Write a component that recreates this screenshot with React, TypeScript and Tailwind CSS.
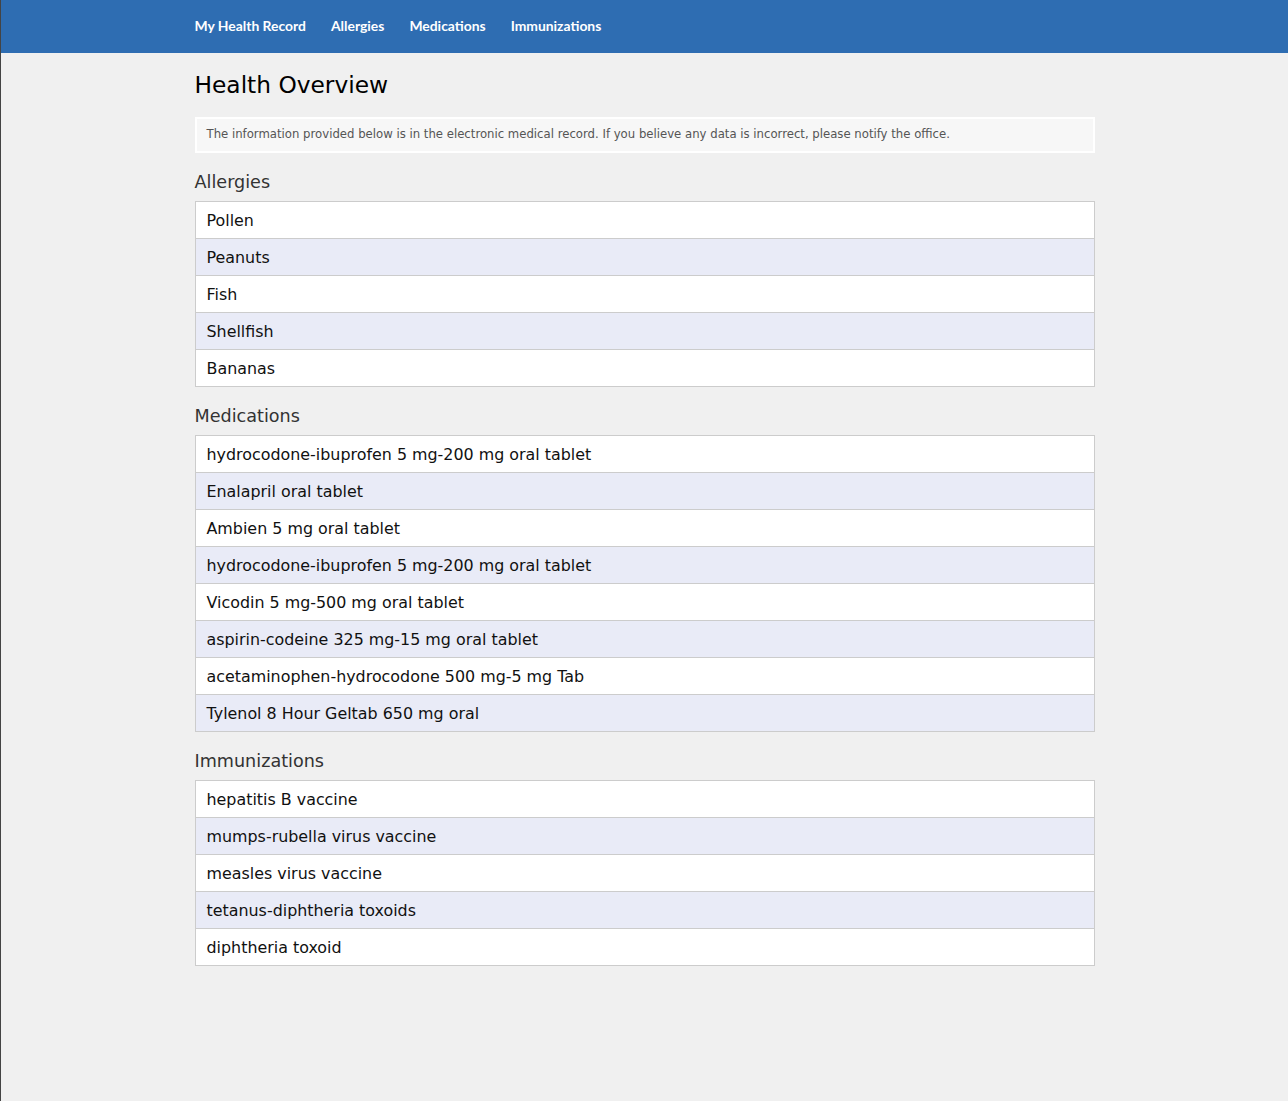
import React from "react";

const allergies = ["Pollen", "Peanuts", "Fish", "Shellfish", "Bananas"];
const medications = [
  "hydrocodone-ibuprofen 5 mg-200 mg oral tablet",
  "Enalapril oral tablet",
  "Ambien 5 mg oral tablet",
  "hydrocodone-ibuprofen 5 mg-200 mg oral tablet",
  "Vicodin 5 mg-500 mg oral tablet",
  "aspirin-codeine 325 mg-15 mg oral tablet",
  "acetaminophen-hydrocodone 500 mg-5 mg Tab",
  "Tylenol 8 Hour Geltab 650 mg oral",
];
const immunizations = [
  "hepatitis B vaccine",
  "mumps-rubella virus vaccine",
  "measles virus vaccine",
  "tetanus-diphtheria toxoids",
  "diphtheria toxoid",
];

function Section({ title, items }: { title: string; items: string[] }) {
  return (
    <section className="mt-[18px]">
      <h2 className="text-[17.6px] leading-[22px] text-[#333] mb-[8px]">{title}</h2>
      <ul className="border border-[#cccccc] bg-white">
        {items.map((it, i) => (
          <li
            key={i}
            className={`h-[36px] flex items-center pl-[11px] pt-[1px] text-[15.9px] text-[#111] ${
              i > 0 ? "border-t border-[#cccccc] h-[37px]" : ""
            } ${i % 2 === 1 ? "bg-[#e9ebf7]" : "bg-white"}`}
          >
            {it}
          </li>
        ))}
      </ul>
    </section>
  );
}

export default function App() {
  return (
    <div
      className="min-h-[1101px] bg-[#f0f0f0] border-l border-[#444]"
      style={{ fontFamily: '"DejaVu Sans", Verdana, sans-serif' }}
    >
      <nav className="h-[53px] bg-[#2e6db2]">
        <div className="w-[900px] mx-auto flex items-center h-full gap-[25px]">
          {["My Health Record", "Allergies", "Medications", "Immunizations"].map((n) => (
            <a
              key={n}
              className="text-white text-[13.9px] font-bold"
              style={{ fontFamily: 'Lato, "Open Sans", sans-serif' }}
            >
              {n}
            </a>
          ))}
        </div>
      </nav>
      <main className="w-[900px] mx-auto pt-[17px]">
        <h1 className="text-[23.3px] leading-[30px] text-black">Health Overview</h1>
        <div className="mt-[17px] h-[36px] border-2 border-white bg-[#f7f7f7] flex items-center pl-[10px] text-[11.7px] text-[#555]">
          The information provided below is in the electronic medical record. If you believe any data is incorrect, please notify the office.
        </div>
        <Section title="Allergies" items={allergies} />
        <Section title="Medications" items={medications} />
        <Section title="Immunizations" items={immunizations} />
      </main>
    </div>
  );
}
